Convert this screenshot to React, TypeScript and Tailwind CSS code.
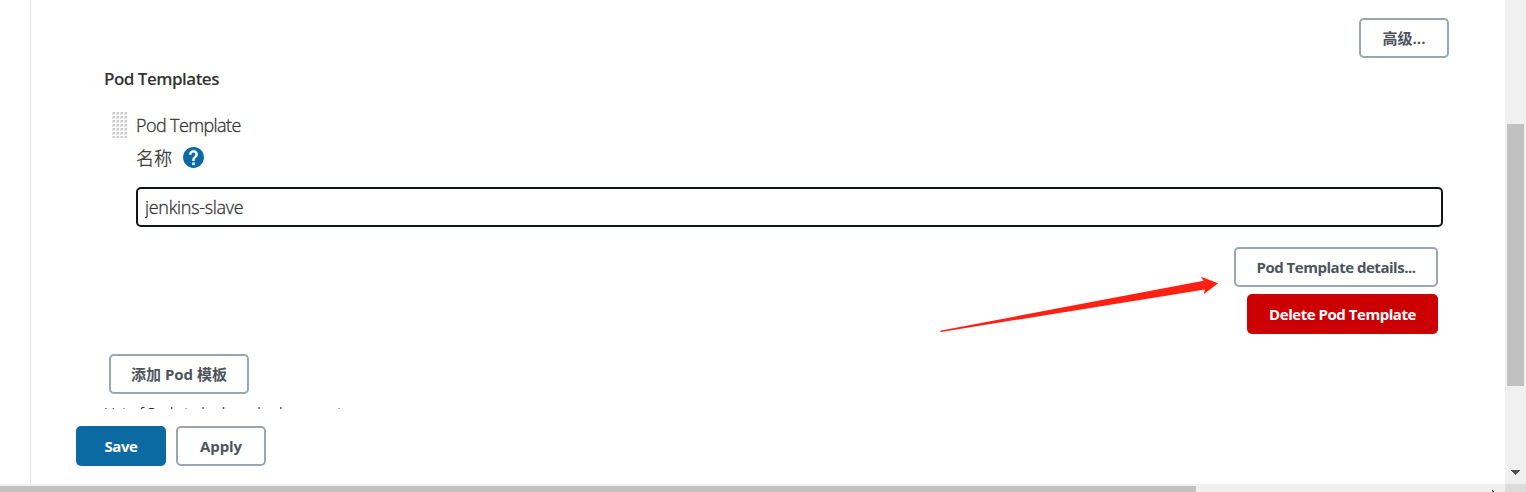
import type { ReactNode } from "react";

const FONT = "font-['Open_Sans','Noto_Sans_CJK_SC',sans-serif]";

function Button({ className, children }: { className: string; children: ReactNode }) {
  return (
    <button
      type="button"
      className={`flex h-10 shrink-0 items-center justify-center rounded-[5px] text-[15px] leading-5 font-bold whitespace-nowrap ${className}`}
    >
      {children}
    </button>
  );
}

const OUTLINE = "border-2 border-[#9aa6b0] bg-white text-[#4d545d]";

function Grip() {
  return (
    <svg width="15" height="26" viewBox="0 0 15 26" className="mt-0.5 shrink-0" shapeRendering="crispEdges">
      {[0, 4, 8, 12, 16, 20, 24].flatMap((y) =>
        [0, 4, 8, 12].map((x) => (
          <g key={`${x}-${y}`}>
            <rect x={x} y={y} width="3" height="3" fill="#e6e6e4" />
            <rect x={x + 1} y={y} width="2" height="2" fill="#cacac8" />
          </g>
        )),
      )}
    </svg>
  );
}

function HelpIcon() {
  return (
    <svg width="25" height="25" viewBox="0 0 24 24" className="ml-[9px] shrink-0">
      <path
        fill="#0b6aa2"
        stroke="#0b6aa2"
        strokeWidth="0"
        d="M12 2C6.48 2 2 6.48 2 12s4.48 10 10 10 10-4.48 10-10S17.52 2 12 2z"
      />
      <path
        fill="#fff"
        stroke="#fff"
        strokeWidth="0.5"
        d="M13 19h-2v-2h2v2zm2.07-7.75-.9.92C13.45 12.9 13 13.5 13 15h-2v-.5c0-1.1.45-2.1 1.17-2.83l1.24-1.26c.37-.36.59-.86.59-1.41 0-1.1-.9-2-2-2s-2 .9-2 2H8c0-2.21 1.79-4 4-4s4 1.79 4 4c0 .88-.36 1.68-.93 2.25z"
      />
    </svg>
  );
}

function Arrow() {
  return (
    <svg width="280" height="58" viewBox="0 0 280 58" className="absolute top-[276px] left-[940px]">
      <path fill="#ff2014" d="M0 54.7 263.5 4.8 261 .8 278.2 7.3 264 18 264.7 13.5 1 56Z" />
    </svg>
  );
}

export default function App() {
  return (
    <div className={`relative flex h-[492px] w-[1526px] flex-col overflow-hidden bg-white text-[#333] ${FONT}`}>
      <div className="flex h-[484px]">
        <aside className="w-[31px] shrink-0 border-r border-[#e6eced]" />
        <main className="flex w-[1474px] shrink-0 flex-col">
          <section className="flex h-[409px] flex-col overflow-hidden pt-[18px] pr-[56px] pl-[73px]">
            <Button className={`w-[90px] self-end ${OUTLINE}`}>
              <span>高级...</span>
            </Button>
            <h2 className="mt-[9px] h-6 text-[17px] leading-6 font-semibold tracking-[-0.5px]">
              <span>Pod Templates</span>
            </h2>
            <div className="mt-[19px] flex h-[33px] pl-2">
              <Grip />
              <span className="ml-[9px] h-[30px] text-[18px] leading-[30px] font-light tracking-[-0.6px] [-webkit-text-stroke:0.3px_#333]">Pod Template</span>
            </div>
            <div className="mt-0.5 flex h-[30px] items-center pl-8">
              <span className="pt-0.5 text-[18px] leading-[30px] font-light [-webkit-text-stroke:0.3px_#333]">名称</span>
              <HelpIcon />
            </div>
            <div className="mt-[15px] pr-1.5 pl-8">
              <input
                defaultValue="jenkins-slave"
                className="h-10 w-full rounded-[5px] border-2 border-[#111518] px-[7px] text-[18px] font-light tracking-[-0.3px] outline-none [-webkit-text-stroke:0.3px_#333]"
              />
            </div>
            <div className="mt-5 flex flex-col items-end gap-[7px] pr-[11px]">
              <Button className={`w-[204px] tracking-[-0.48px] ${OUTLINE}`}>
                <span>Pod Template details...</span>
              </Button>
              <Button className="w-[191px] bg-[#cc0003] tracking-[-0.46px] text-white">
                <span>Delete Pod Template</span>
              </Button>
            </div>
            <Button className={`mt-5 ml-[5px] w-[140px] ${OUTLINE}`}>
              <span>添加 Pod 模板</span>
            </Button>
            <p className="mt-[9px] shrink-0 text-[14px] leading-5 tracking-[0.1px]">List of Pods to be launched as agents</p>
          </section>
          <footer className="flex gap-2.5 pt-[17px] pl-[45px]">
            <Button className="w-[90px] bg-[#0b6aa2] tracking-[-0.4px] text-white">
              <span>Save</span>
            </Button>
            <Button className={`w-[90px] tracking-[-0.1px] ${OUTLINE}`}>
              <span>Apply</span>
            </Button>
          </footer>
        </main>
        <div className="flex w-[21px] shrink-0 flex-col items-center bg-[#f0f0f0] pt-[124px]">
          <div className="mr-px h-[262px] w-[17px] bg-[#c1c1c1]" />
          <svg width="9" height="5" viewBox="0 0 9 5" className="mt-[84px]" shapeRendering="crispEdges">
            <path d="M0 0h9v1H8v1H7v1H6v1H5v1H4V4H3V3H2V2H1V1H0Z" fill="#505050" />
          </svg>
        </div>
      </div>
      <div className="flex h-2">
        <div className="flex w-[1505px] items-end bg-[#f0f0f0]">
          <div className="h-1.5 w-[1196px] bg-[#c1c1c1]" />
          <svg width="2" height="2" viewBox="0 0 2 2" className="ml-[296px]" shapeRendering="crispEdges">
            <path d="M0 0h1v1h1v1H0Z" fill="#505050" />
          </svg>
        </div>
        <div className="w-[21px] bg-[#dcdcdc]" />
      </div>
      <Arrow />
    </div>
  );
}
